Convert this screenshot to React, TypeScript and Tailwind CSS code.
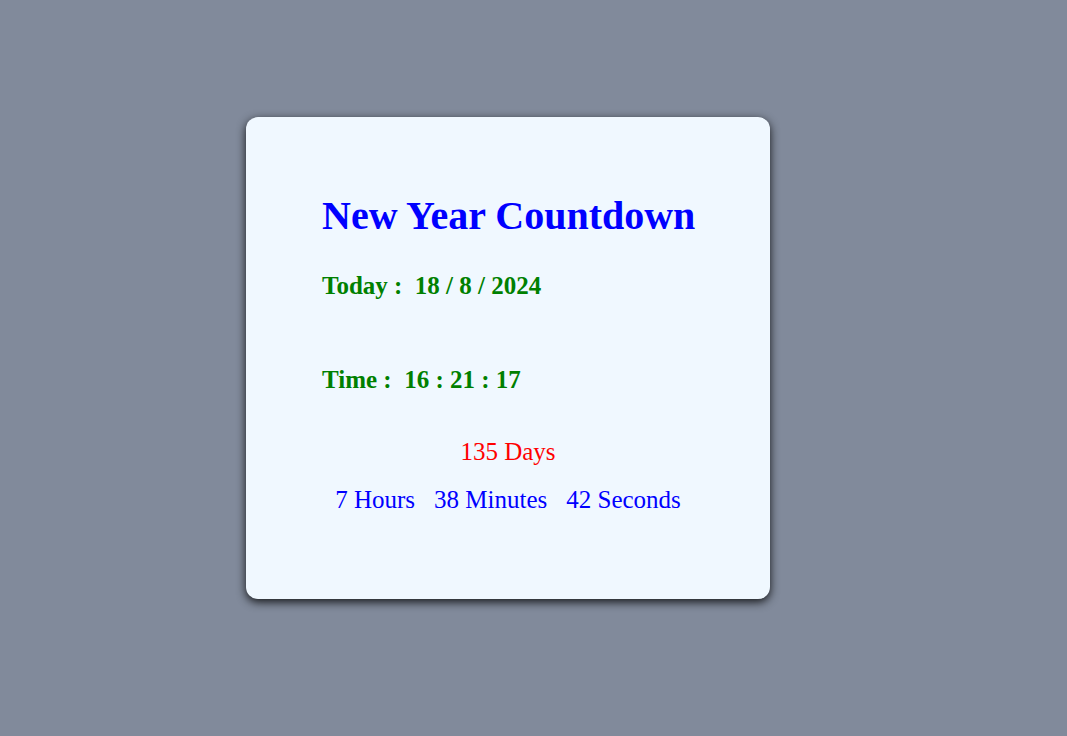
import React from "react";

export default function App() {
  const serif = { fontFamily: '"Liberation Serif", "Times New Roman", serif' };
  return (
    <div className="min-h-screen w-full bg-[#818a9b] pt-[117px] pl-[246px]" style={serif}>
      <div className="w-[524px] h-[482px] rounded-[12px] bg-[#f0f8ff] shadow-[0_3px_10px_rgba(0,0,0,0.85)] pt-[76px] flex flex-col">
        <h1 className="pl-[76px] text-[40px] leading-[46px] font-bold text-[#0000ff]">New Year Countdown</h1>
        <div className="pl-[76px] mt-[32px] text-[25px] leading-[30px] font-bold text-[#008000] whitespace-pre">Today :  18 / 8 / 2024</div>
        <div className="pl-[76px] mt-[64px] text-[25px] leading-[30px] font-bold text-[#008000] whitespace-pre">Time :  16 : 21 : 17</div>
        <div className="mt-[42px] text-center text-[25px] leading-[30px] text-[#ff0000]">135 Days</div>
        <div className="mt-[18px] flex justify-center gap-[19px] text-[25px] leading-[30px] text-[#0000ff]">
          <span>7 Hours</span>
          <span>38 Minutes</span>
          <span>42 Seconds</span>
        </div>
      </div>
    </div>
  );
}
